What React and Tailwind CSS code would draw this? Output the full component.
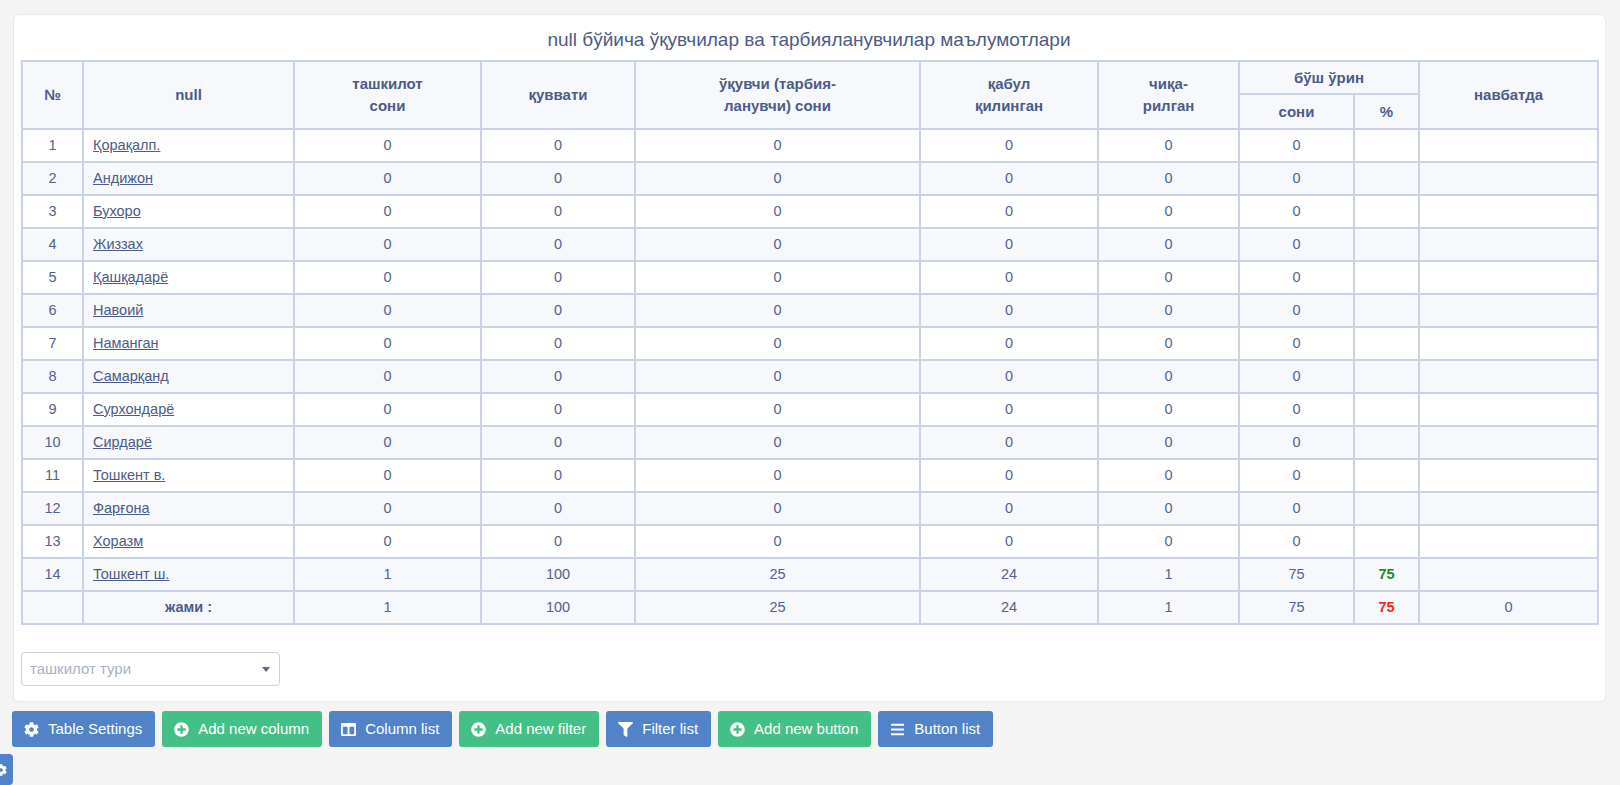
import { FaCog, FaPlusCircle, FaColumns, FaFilter, FaBars } from 'react-icons/fa';

const regions = [
  'Қорақалп.', 'Андижон', 'Бухоро', 'Жиззах', 'Қашқадарё', 'Навоий', 'Наманган',
  'Самарқанд', 'Сурхондарё', 'Сирдарё', 'Тошкент в.', 'Фарғона', 'Хоразм',
];

const rows = [
  ...regions.map((name, i) => ({ n: i + 1, name, org: 0, cap: 0, pupils: 0, acc: 0, out: 0, free: 0, pct: null })),
  { n: 14, name: 'Тошкент ш.', org: 1, cap: 100, pupils: 25, acc: 24, out: 1, free: 75, pct: 75 },
];

const widths = [61, 211, 187, 154, 285, 178, 141, 115, 65, 179];

const td = 'border-2 border-[#c9d3e4] text-center px-2';
const th = 'border-2 border-[#c9d3e4] text-center font-bold px-2 leading-[22px] text-[15px]';

function Btn({ color, icon: Icon, children }) {
  const bg = color === 'green' ? 'bg-[#45bf88]' : 'bg-[#5083c8]';
  return (
    <button className={`${bg} h-9 pl-3 pr-[13px] rounded-[3px] text-white text-[15px] flex items-center gap-[9px]`}>
      <Icon className="text-[15px]" />
      {children}
    </button>
  );
}

export default function App() {
  return (
    <div className="min-h-[785px] bg-[#f4f4f5] pt-[14px] text-[#55628c]" style={{ fontFamily: '"Liberation Sans", Arial, sans-serif' }}>
      <div className="ml-[13px] mr-[14px] bg-white border border-[#e6e9f1] rounded-[6px] pl-[7px] pr-[8px] pt-[13px] pb-[15px]">
        <h2 className="text-center text-[19px] leading-6 mb-[8px] text-[#4d5b88]">
          null бўйича ўқувчилар ва тарбияланувчилар маълумотлари
        </h2>
        <table className="w-[1576px] table-fixed border-collapse border-2 border-[#c9d3e4] text-[14.5px]">
          <colgroup>
            {widths.map((w, i) => <col key={i} style={{ width: w }} />)}
          </colgroup>
          <thead className="bg-[#f6f8fc] text-[#4d5b88]">
            <tr className="h-[33px]">
              <th rowSpan={2} className={th}>№</th>
              <th rowSpan={2} className={th}>null</th>
              <th rowSpan={2} className={th}>ташкилот<br />сони</th>
              <th rowSpan={2} className={th}>қуввати</th>
              <th rowSpan={2} className={th}>ўқувчи (тарбия-<br />ланувчи) сони</th>
              <th rowSpan={2} className={th}>қабул<br />қилинган</th>
              <th rowSpan={2} className={th}>чиқа-<br />рилган</th>
              <th colSpan={2} className={th}>бўш ўрин</th>
              <th rowSpan={2} className={th}>навбатда</th>
            </tr>
            <tr className="h-[35px]">
              <th className={th}>сони</th>
              <th className={th}>%</th>
            </tr>
          </thead>
          <tbody>
            {rows.map((r, i) => (
              <tr key={r.n} className={`h-[33px] ${i % 2 === 1 ? 'bg-[#f6f8fc]' : 'bg-white'}`}>
                <td className={td}>{r.n}</td>
                <td className="border-2 border-[#c9d3e4] pl-[9px]">
                  <a href="#" className="underline text-[#4d5b88]">{r.name}</a>
                </td>
                <td className={td}>{r.org}</td>
                <td className={td}>{r.cap}</td>
                <td className={td}>{r.pupils}</td>
                <td className={td}>{r.acc}</td>
                <td className={td}>{r.out}</td>
                <td className={td}>{r.free}</td>
                <td className={`${td} font-bold text-[#1f8a1f]`}>{r.pct}</td>
                <td className={td}></td>
              </tr>
            ))}
            <tr className="h-[33px] bg-[#f6f8fc]">
              <td className={td}></td>
              <td className={`${td} font-bold text-[#4d5b88]`}>жами :</td>
              <td className={td}>1</td>
              <td className={td}>100</td>
              <td className={td}>25</td>
              <td className={td}>24</td>
              <td className={td}>1</td>
              <td className={td}>75</td>
              <td className={`${td} font-bold text-[#ff1f1f]`}>75</td>
              <td className={td}>0</td>
            </tr>
          </tbody>
        </table>

        <div className="mt-[27px] w-[259px] h-[34px] border border-[#c9d1e2] rounded-[4px] flex items-center justify-between pl-2 pr-[9px] text-[15px] text-[#a9b1c6]">
          <span>ташкилот тури</span>
          <span className="w-0 h-0 border-l-[4px] border-r-[4px] border-t-[5px] border-l-transparent border-r-transparent border-t-[#5d6a8f]" />
        </div>
      </div>

      <div className="flex gap-[7px] ml-[12px] mt-[9px]">
        <Btn color="blue" icon={FaCog}>Table Settings</Btn>
        <Btn color="green" icon={FaPlusCircle}>Add new column</Btn>
        <Btn color="blue" icon={FaColumns}>Column list</Btn>
        <Btn color="green" icon={FaPlusCircle}>Add new filter</Btn>
        <Btn color="blue" icon={FaFilter}>Filter list</Btn>
        <Btn color="green" icon={FaPlusCircle}>Add new button</Btn>
        <Btn color="blue" icon={FaBars}>Button list</Btn>
      </div>

      <div className="fixed left-0 top-[754px] w-[13px] h-[31px] bg-[#5083c8] rounded-r-[4px] overflow-hidden flex items-center">
        <FaCog className="text-white text-[12px] -ml-[5px]" />
      </div>
    </div>
  );
}
